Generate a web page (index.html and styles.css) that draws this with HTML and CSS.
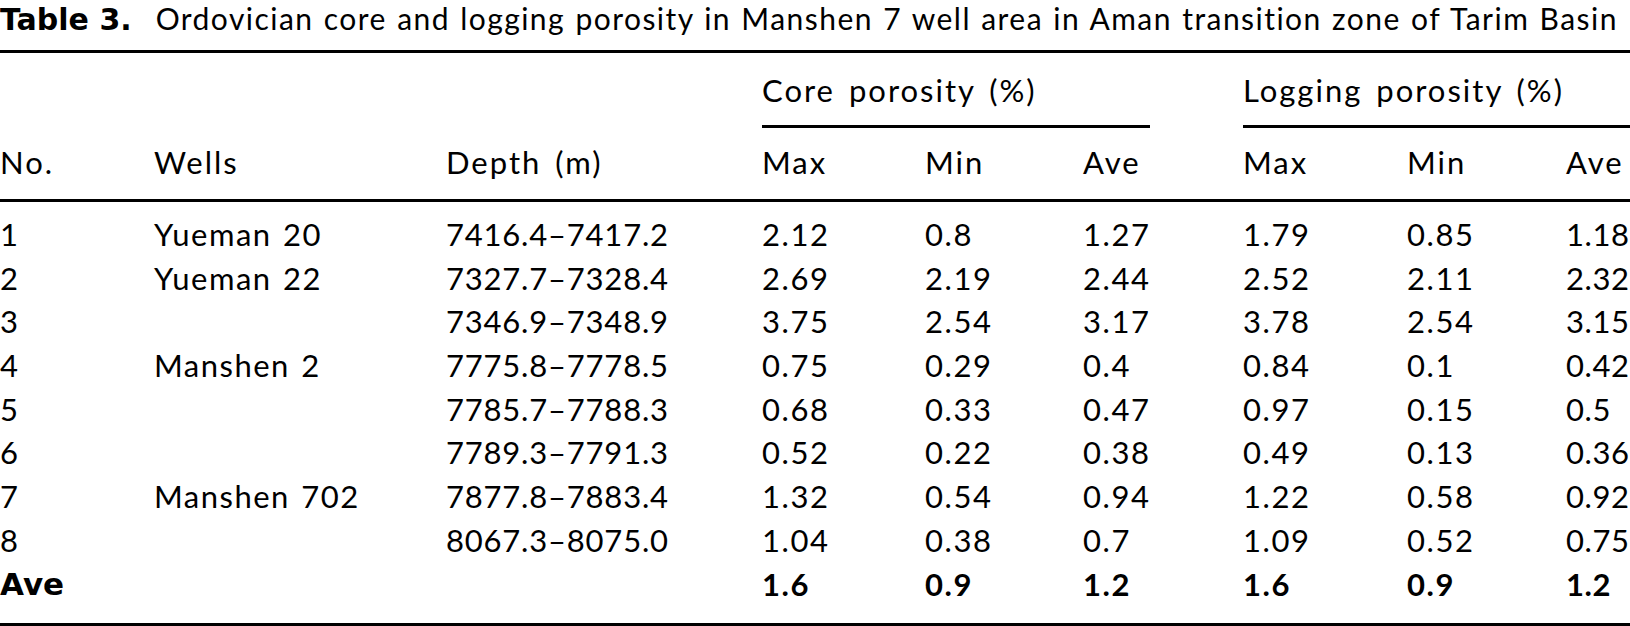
FILE: index.html
```html
<!DOCTYPE html>
<html lang="en">
<head>
<meta charset="utf-8">
<title>Table 3</title>
<link rel="stylesheet" href="styles.css">
</head>
<body>
<div class="page">
  <p class="caption"><span class="label">Table 3.</span><span class="caption-text">Ordovician core and logging porosity in Manshen 7 well area in Aman transition zone of Tarim Basin</span></p>
  <table class="data">
    <colgroup>
      <col class="c-no">
      <col class="c-well">
      <col class="c-depth">
      <col class="c-max1">
      <col class="c-min1">
      <col class="c-ave1">
      <col class="c-max2">
      <col class="c-min2">
      <col class="c-ave2">
    </colgroup>
    <thead>
      <tr class="group">
        <th colspan="3"></th>
        <th colspan="3"><div class="span-label span-core">Core porosity (%)</div></th>
        <th colspan="3"><div class="span-label span-log">Logging porosity (%)</div></th>
      </tr>
      <tr class="cols">
        <th>No.</th><th>Wells</th><th>Depth (m)</th>
        <th>Max</th><th>Min</th><th>Ave</th>
        <th>Max</th><th>Min</th><th>Ave</th>
      </tr>
    </thead>
    <tbody>
      <tr class="first"><td class="num-id">1</td><td class="well">Yueman 20</td><td class="depth">7416.4–7417.2</td><td>2.12</td><td>0.8</td><td>1.27</td><td>1.79</td><td>0.85</td><td class="last">1.18</td></tr>
      <tr><td class="num-id">2</td><td class="well">Yueman 22</td><td class="depth">7327.7–7328.4</td><td>2.69</td><td>2.19</td><td>2.44</td><td>2.52</td><td>2.11</td><td class="last">2.32</td></tr>
      <tr><td class="num-id">3</td><td class="well"></td><td class="depth">7346.9–7348.9</td><td>3.75</td><td>2.54</td><td>3.17</td><td>3.78</td><td>2.54</td><td class="last">3.15</td></tr>
      <tr><td class="num-id">4</td><td class="well">Manshen 2</td><td class="depth">7775.8–7778.5</td><td>0.75</td><td>0.29</td><td>0.4</td><td>0.84</td><td>0.1</td><td class="last">0.42</td></tr>
      <tr><td class="num-id">5</td><td class="well"></td><td class="depth">7785.7–7788.3</td><td>0.68</td><td>0.33</td><td>0.47</td><td>0.97</td><td>0.15</td><td class="last">0.5</td></tr>
      <tr><td class="num-id">6</td><td class="well"></td><td class="depth">7789.3–7791.3</td><td>0.52</td><td>0.22</td><td>0.38</td><td>0.49</td><td>0.13</td><td class="last">0.36</td></tr>
      <tr><td class="num-id">7</td><td class="well">Manshen 702</td><td class="depth">7877.8–7883.4</td><td>1.32</td><td>0.54</td><td>0.94</td><td>1.22</td><td>0.58</td><td class="last">0.92</td></tr>
      <tr><td class="num-id">8</td><td class="well"></td><td class="depth">8067.3–8075.0</td><td>1.04</td><td>0.38</td><td>0.7</td><td>1.09</td><td>0.52</td><td class="last">0.75</td></tr>
      <tr class="total"><td class="total-label">Ave</td><td class="well"></td><td class="depth"></td><td>1.6</td><td>0.9</td><td>1.2</td><td>1.6</td><td>0.9</td><td class="last">1.2</td></tr>
    </tbody>
  </table>
</div>
</body>
</html>
```

FILE: styles.css
```css
html, body {
  margin: 0;
  padding: 0;
  background: #ffffff;
}

body {
  width: 1630px;
  height: 626px;
  overflow: hidden;
  color: #000000;
  font-family: Lato, "Open Sans", "Liberation Sans", sans-serif;
  font-size: 31px;
}

.page {
  display: flex;
  flex-direction: column;
}

.caption {
  margin: 0;
  height: 50px;
  line-height: normal;
  white-space: nowrap;
  font-size: 30px;
}

.caption .label {
  font-family: "DejaVu Sans", Lato, sans-serif;
  font-weight: 700;
  margin-right: 24px;
}

.caption .caption-text {
  letter-spacing: 1.45px;
  word-spacing: 1.2px;
}

.data {
  width: 1630px;
  table-layout: fixed;
  border-collapse: separate;
  border-spacing: 0;
  border-top: 3px solid #000;
  border-bottom: 3px solid #000;
}

.c-no { width: 154px; }
.c-well { width: 292px; }
.c-depth { width: 316px; }
.c-max1 { width: 163px; }
.c-min1 { width: 158px; }
.c-ave1 { width: 160px; }
.c-max2 { width: 164px; }
.c-min2 { width: 159px; }
.c-ave2 { width: 64px; }

.data th,
.data td {
  padding: 0;
  text-align: left;
  vertical-align: top;
  white-space: nowrap;
  line-height: 43.7px;
  font-weight: 400;
  overflow: visible;
  letter-spacing: 1.6px;
}

.data th {
  letter-spacing: 2px;
  word-spacing: 4px;
}

.data td.well {
  letter-spacing: 1.5px;
  word-spacing: 2px;
}

.data td.depth {
  letter-spacing: 0.8px;
}

.data td.last {
  letter-spacing: 0.6px;
}

.group th {
  padding-top: 16px;
}

.span-label {
  padding-bottom: 12px;
  border-bottom: 3px solid #000;
}

.span-core {
  margin-right: 93px;
}

.cols th {
  padding-top: 13.5px;
  padding-bottom: 14px;
  border-bottom: 3px solid #000;
}

.first td {
  padding-top: 11px;
}

.total td {
  font-weight: 700;
  padding-bottom: 17px;
}

.total td.total-label {
  font-family: "DejaVu Sans", Lato, sans-serif;
  letter-spacing: 0;
}
```
